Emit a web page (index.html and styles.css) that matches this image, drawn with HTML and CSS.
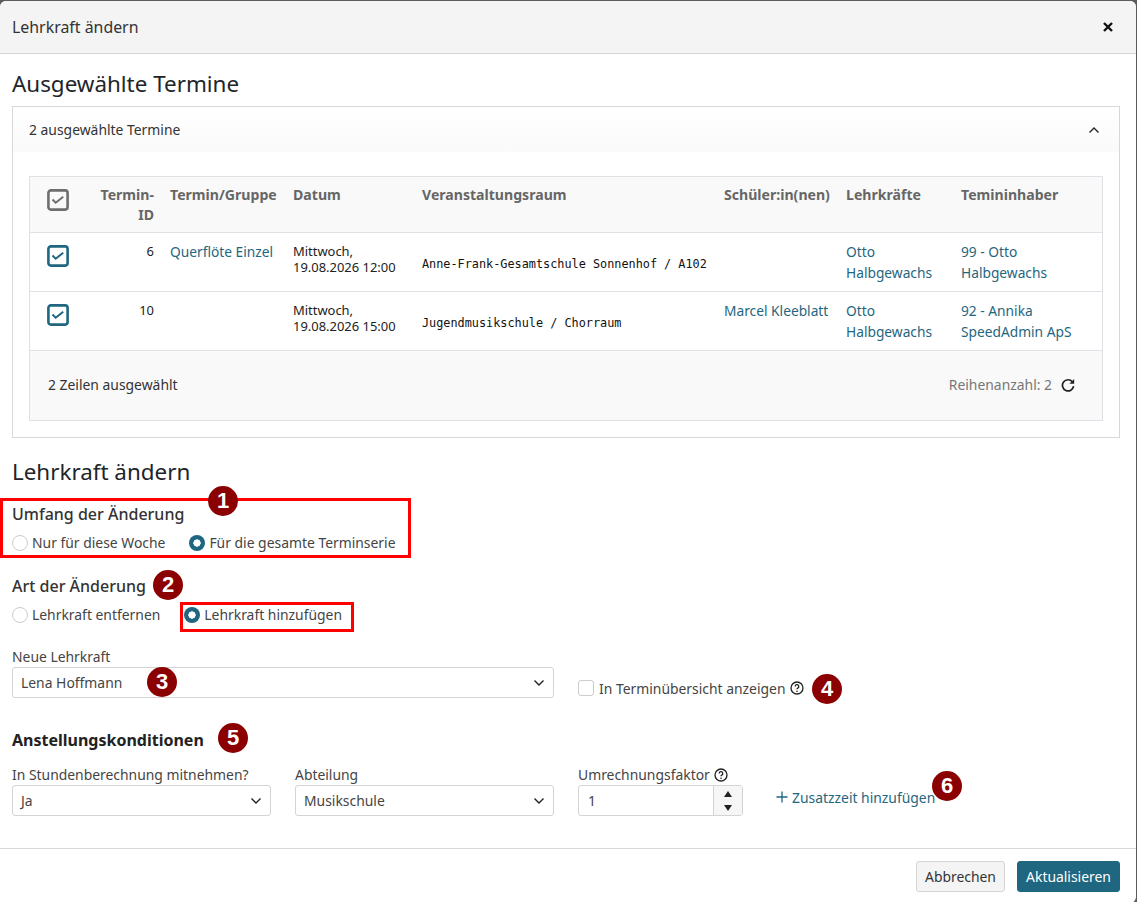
FILE: index.html
```html
<!DOCTYPE html>
<html lang="de">
<head>
<meta charset="utf-8">
<title>Lehrkraft ändern</title>
<link rel="stylesheet" href="styles.css">
</head>
<body>
<div class="modal">
  <header class="modal-head">
    <span class="modal-title">Lehrkraft ändern</span>
    <svg class="close" viewBox="0 0 10 10" width="10" height="10"><path d="M1 1l8 8M9 1l-8 8" fill="none" stroke="#111" stroke-width="2.4"/></svg>
  </header>
  <main class="modal-body">
    <h2 class="section-title">Ausgewählte Termine</h2>
    <section class="card">
      <div class="card-head">
        <span>2 ausgewählte Termine</span>
        <svg viewBox="0 0 12 8" width="12" height="8"><path d="M1.5 6.5L6 2l4.5 4.5" fill="none" stroke="#222" stroke-width="1.4"/></svg>
      </div>
      <div class="table-wrap">
        <table class="grid">
          <colgroup>
            <col class="c-check"><col class="c-id"><col class="c-group"><col class="c-date"><col class="c-room"><col class="c-student"><col class="c-teacher"><col class="c-owner">
          </colgroup>
          <thead>
            <tr>
              <th class="check-cell"><svg class="cb" viewBox="0 0 22 22" width="22" height="22"><rect x="1.4" y="1.4" width="19.2" height="19.2" rx="2.5" fill="none" stroke="#6e6e6e" stroke-width="2.6"/><path d="M5.5 10.5l3.2 3.2 7.5-6" fill="none" stroke="#6e6e6e" stroke-width="2"/></svg></th>
              <th class="num">Termin-ID</th>
              <th>Termin/Gruppe</th>
              <th>Datum</th>
              <th>Veranstaltungsraum</th>
              <th>Schüler:in(nen)</th>
              <th>Lehrkräfte</th>
              <th>Temininhaber</th>
            </tr>
          </thead>
          <tbody>
            <tr>
              <td class="check-cell"><svg class="cb" viewBox="0 0 22 22" width="22" height="22"><rect x="1.4" y="1.4" width="19.2" height="19.2" rx="2.5" fill="none" stroke="#1f6680" stroke-width="2.6"/><path d="M5.5 10.5l3.2 3.2 7.5-6" fill="none" stroke="#1f6680" stroke-width="2"/></svg></td>
              <td class="num small">6</td>
              <td><a class="link">Querflöte Einzel</a></td>
              <td class="small">Mittwoch,<br>19.08.2026 12:00</td>
              <td class="mono">Anne-Frank-Gesamtschule Sonnenhof / A102</td>
              <td></td>
              <td><a class="link">Otto Halbgewachs</a></td>
              <td><a class="link">99 - Otto Halbgewachs</a></td>
            </tr>
            <tr>
              <td class="check-cell"><svg class="cb" viewBox="0 0 22 22" width="22" height="22"><rect x="1.4" y="1.4" width="19.2" height="19.2" rx="2.5" fill="none" stroke="#1f6680" stroke-width="2.6"/><path d="M5.5 10.5l3.2 3.2 7.5-6" fill="none" stroke="#1f6680" stroke-width="2"/></svg></td>
              <td class="num small">10</td>
              <td></td>
              <td class="small">Mittwoch,<br>19.08.2026 15:00</td>
              <td class="mono">Jugendmusikschule / Chorraum</td>
              <td><a class="link">Marcel Kleeblatt</a></td>
              <td><a class="link">Otto Halbgewachs</a></td>
              <td><a class="link">92 - Annika SpeedAdmin ApS</a></td>
            </tr>
          </tbody>
        </table>
        <div class="table-foot">
          <span>2 Zeilen ausgewählt</span>
          <span class="row-count">Reihenanzahl: 2
            <svg viewBox="0 0 14 14" width="14" height="14"><path d="M11.4 3.8A5.6 5.6 0 1 0 12.6 8.2" fill="none" stroke="#222" stroke-width="1.7"/><path d="M13.2 1v4.8H8.4z" fill="#222"/></svg>
          </span>
        </div>
      </div>
    </section>

    <h2 class="section-title second">Lehrkraft ändern</h2>
    <h3 class="group-title">Umfang der Änderung</h3>
    <div class="radios">
      <label class="radio"><i class="dot"></i>Nur für diese Woche</label>
      <label class="radio"><i class="dot on"></i>Für die gesamte Terminserie</label>
    </div>
    <h3 class="group-title art">Art der Änderung</h3>
    <div class="radios">
      <label class="radio"><i class="dot"></i>Lehrkraft entfernen</label>
      <label class="radio"><i class="dot on"></i>Lehrkraft hinzufügen</label>
    </div>

    <div class="teacher-row">
      <div class="field">
        <label class="lbl">Neue Lehrkraft</label>
        <div class="select">Lena Hoffmann<svg viewBox="0 0 12 8" width="12" height="8"><path d="M1.5 1.5L6 6l4.5-4.5" fill="none" stroke="#222" stroke-width="1.4"/></svg></div>
      </div>
      <label class="check"><i class="box"></i>In Terminübersicht anzeigen
        <svg class="help" viewBox="0 0 14 14" width="14" height="14"><circle cx="7" cy="7" r="6" fill="none" stroke="#222" stroke-width="1.3"/><path d="M5.2 5.5a1.8 1.8 0 1 1 2.6 1.6c-.6.3-.8.6-.8 1.2" fill="none" stroke="#222" stroke-width="1.3"/><circle cx="7" cy="10.2" r=".8" fill="#222"/></svg>
      </label>
    </div>

    <h3 class="terms-title">Anstellungskonditionen</h3>
    <div class="terms-row">
      <div class="field">
        <label class="lbl">In Stundenberechnung mitnehmen?</label>
        <div class="select">Ja<svg viewBox="0 0 12 8" width="12" height="8"><path d="M1.5 1.5L6 6l4.5-4.5" fill="none" stroke="#222" stroke-width="1.4"/></svg></div>
      </div>
      <div class="field">
        <label class="lbl">Abteilung</label>
        <div class="select">Musikschule<svg viewBox="0 0 12 8" width="12" height="8"><path d="M1.5 1.5L6 6l4.5-4.5" fill="none" stroke="#222" stroke-width="1.4"/></svg></div>
      </div>
      <div class="field factor">
        <label class="lbl">Umrechnungsfaktor
          <svg class="help" viewBox="0 0 14 14" width="14" height="14"><circle cx="7" cy="7" r="6" fill="none" stroke="#222" stroke-width="1.3"/><path d="M5.2 5.5a1.8 1.8 0 1 1 2.6 1.6c-.6.3-.8.6-.8 1.2" fill="none" stroke="#222" stroke-width="1.3"/><circle cx="7" cy="10.2" r=".8" fill="#222"/></svg>
        </label>
        <div class="spin">
          <span class="spin-val">1</span>
          <span class="spin-btns">
            <svg viewBox="0 0 8 6" width="8" height="6"><path d="M4 0l4 6H0z" fill="#222"/></svg>
            <svg viewBox="0 0 8 6" width="8" height="6"><path d="M4 6L0 0h8z" fill="#222"/></svg>
          </span>
        </div>
      </div>
      <a class="add-link"><svg viewBox="0 0 12 12" width="12" height="12"><path d="M6 .5v11M.5 6h11" fill="none" stroke="#1f6680" stroke-width="1.3"/></svg>Zusatzzeit hinzufügen</a>
    </div>
  </main>
  <footer class="modal-foot">
    <button class="btn btn-cancel">Abbrechen</button>
    <button class="btn primary">Aktualisieren</button>
  </footer>

  <div class="mark mark-a"></div>
  <div class="mark mark-b"></div>
  <span class="badge b1">1</span>
  <span class="badge b2">2</span>
  <span class="badge b3">3</span>
  <span class="badge b4">4</span>
  <span class="badge b5">5</span>
  <span class="badge b6">6</span>
</div>
</body>
</html>
```
FILE: styles.css
```css
* { box-sizing: border-box; }
html, body { margin: 0; height: 100%; overflow: hidden; }
body {
  background: #5c5c5c;
  font-family: "Noto Sans", "Open Sans", sans-serif;
  font-size: 13.9px;
  color: #333;
}
.modal {
  position: relative;
  width: 1136px;
  height: 902px;
  margin-top: 1px;
  background: #fff;
  border-radius: 6px 6px 6px 0;
  display: flex;
  flex-direction: column;
  overflow: hidden;
}
.modal-head {
  height: 53px;
  flex: none;
  background: #f4f4f4;
  border-bottom: 1px solid #d4d4d4;
  display: flex;
  align-items: center;
  justify-content: space-between;
  padding: 0 23px 0 12px;
}
.modal-title { font-size: 15.9px; color: #333; }
.modal-body { flex: 1; padding: 0 16px 0 12px; }
.section-title { margin: 0; font-size: 22.4px; line-height: 30px; font-weight: 400; color: #212529; padding-top: 15px; padding-bottom: 7px; }
.section-title.second { padding-top: 19px; padding-bottom: 0; }
.card { border: 1px solid #d8d8d8; height: 332px; }
.card-head {
  height: 45px;
  padding: 0 19px 0 16px;
  display: flex;
  align-items: center;
  justify-content: space-between;
  color: #333;
  background: linear-gradient(#fff, #fafafa);
}
.table-wrap { margin: 24px 16px 0; border: 1px solid #dee2e6; background: #f9f9f9; }
.grid { width: 100%; border-collapse: collapse; table-layout: fixed; }
.c-check { width: 60px; }
.c-id { width: 72px; }
.c-group { width: 123px; }
.c-date { width: 129px; }
.c-room { width: 302px; }
.c-student { width: 122px; }
.c-teacher { width: 115px; }
.grid th {
  height: 55px;
  padding: 8px 8px 0;
  vertical-align: top;
  text-align: left;
  color: #666;
  font-weight: 700;
  line-height: 20px;
  font-size: 14.1px;
  background: #f9f9f9;
}
.grid th.num, .grid td.num { text-align: right; }
.grid th.check-cell, .grid td.check-cell { padding: 12px 0 0 17px; vertical-align: top; }
.grid td {
  height: 59px;
  padding: 8px 8px 0;
  vertical-align: top;
  background: #fff;
  border-top: 1px solid #dee2e6;
  line-height: 21px;
  font-size: 13.75px;
  color: #333;
}
.cb { display: block; }
.grid td.small { font-size: 12.95px; line-height: 16px; color: #222; padding-top: 10px; }
.grid td.mono {
  font-family: "DejaVu Sans Mono", "Liberation Mono", monospace;
  font-size: 11.84px;
  color: #111;
  padding-top: 23px;
  white-space: nowrap;
  line-height: 17px;
}
.link { color: #1f6680; }
.table-foot {
  height: 70px;
  border-top: 1px solid #dee2e6;
  padding: 0 27px 2px 18px;
  display: flex;
  align-items: center;
  justify-content: space-between;
  color: #333;
}
.row-count { display: flex; align-items: center; gap: 9px; color: #777; font-size: 13.9px; }
.group-title { margin: 0; font-size: 16px; font-weight: 500; line-height: 22px; color: #333; padding-top: 16px; }
.group-title.art { padding-top: 22px; }
.radios { display: flex; gap: 24px; margin-top: 8px; color: #444; line-height: 20px; }
.radio { display: flex; align-items: center; gap: 4px; }
.dot { width: 16px; height: 16px; border-radius: 50%; border: 1px solid #ccc; background: #fff; flex: none; }
.dot.on { border: 0; background: radial-gradient(circle, #fff 0 3.4px, #1f6680 3.9px); }
.teacher-row { display: flex; gap: 24px; align-items: flex-end; margin-top: 22px; }
.teacher-row .field { width: 542px; }
.field { display: flex; flex-direction: column; }
.lbl { line-height: 20px; color: #444; display: flex; align-items: center; gap: 4px; }
.select {
  height: 31px;
  border: 1px solid #d4d4d4;
  border-radius: 3px;
  padding: 0 8px;
  display: flex;
  align-items: center;
  justify-content: space-between;
  color: #444;
  background: #fff;
}
.check { display: flex; align-items: center; gap: 5px; height: 22px; margin-bottom: -1px; color: #444; }
.box { width: 16px; height: 16px; border: 1px solid #ccc; border-radius: 3px; }
.help { flex: none; }
.terms-title { margin: 0; font-size: 16px; font-weight: 700; line-height: 22px; color: #222; padding-top: 31px; }
.terms-row { display: flex; gap: 24px; margin-top: 14px; }
.terms-row .field { width: 259px; }
.terms-row .field.factor { width: 165px; }
.spin { height: 31px; border: 1px solid #d4d4d4; border-radius: 3px; display: flex; }
.spin-val { flex: 1; padding-left: 9px; line-height: 29px; color: #444; }
.spin-btns { width: 29px; border-left: 1px solid #d4d4d4; background: #f6f6f6; display: flex; flex-direction: column; align-items: center; justify-content: center; gap: 8px; }
.add-link { margin: 22px 0 0 9px; color: #1f6680; display: flex; align-items: center; gap: 4px; height: 20px; }
.modal-foot {
  flex: none;
  height: 54px;
  margin-bottom: 1px;
  border-top: 1px solid #d8d8d8;
  display: flex;
  justify-content: flex-end;
  align-items: flex-start;
  gap: 12px;
  padding: 12px 16px 0 0;
}
.btn { height: 31px; padding: 0; border-radius: 3px; font: inherit; border: 1px solid #d4d4d4; background: #f4f4f4; color: #333; width: 89px; }
.btn.primary { width: 103px; background: #1f6680; border-color: #1f6680; color: #fff; }
.mark { position: absolute; border: 3px solid #f00; }
.mark-a { left: 0; top: 497px; width: 411px; height: 60px; }
.mark-b { left: 180px; top: 601px; width: 174px; height: 30px; }
.badge {
  position: absolute;
  width: 30px;
  height: 30px;
  border-radius: 50%;
  background: #8b0000;
  color: #fff;
  font-family: "Liberation Sans", Arial, sans-serif;
  font-size: 22px;
  font-weight: 700;
  line-height: 30px;
  text-align: center;
}
.b1 { left: 208px; top: 485px; }
.b2 { left: 153px; top: 569px; }
.b3 { left: 147px; top: 666px; }
.b4 { left: 812px; top: 673px; }
.b5 { left: 218px; top: 722px; }
.b6 { left: 932px; top: 770px; }
```
